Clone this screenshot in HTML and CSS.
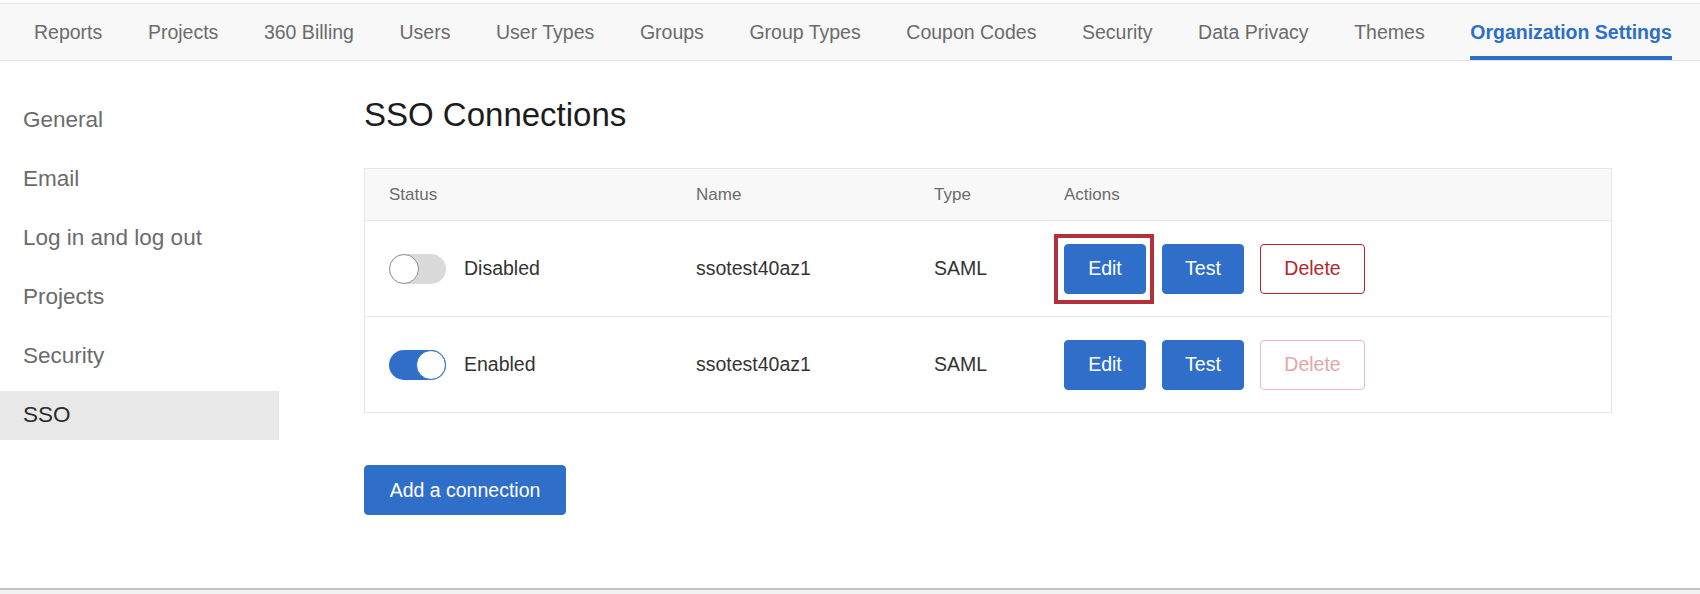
FILE: index.html
```html
<!DOCTYPE html>
<html>
<head>
    <title>Organization Settings - SSO</title>
    <link rel="stylesheet" href="styles.css">
</head>
<body>
    <nav class="topnav">
        <a class="nav-item">Reports</a>
        <a class="nav-item">Projects</a>
        <a class="nav-item">360 Billing</a>
        <a class="nav-item">Users</a>
        <a class="nav-item">User Types</a>
        <a class="nav-item">Groups</a>
        <a class="nav-item">Group Types</a>
        <a class="nav-item">Coupon Codes</a>
        <a class="nav-item">Security</a>
        <a class="nav-item">Data Privacy</a>
        <a class="nav-item">Themes</a>
        <a class="nav-item active">Organization Settings</a>
    </nav>

    <div class="layout">
        <aside class="sidebar">
            <div class="side-item">General</div>
            <div class="side-item">Email</div>
            <div class="side-item">Log in and log out</div>
            <div class="side-item">Projects</div>
            <div class="side-item">Security</div>
            <div class="side-item selected">SSO</div>
        </aside>

        <main class="main">
            <h1>SSO Connections</h1>

            <div class="table">
                <div class="row head">
                    <div>Status</div>
                    <div>Name</div>
                    <div>Type</div>
                    <div>Actions</div>
                </div>
                <div class="row">
                    <div class="status"><span class="toggle"></span>Disabled</div>
                    <div>ssotest40az1</div>
                    <div>SAML</div>
                    <div class="actions">
                        <button class="btn primary highlighted">Edit</button>
                        <button class="btn primary">Test</button>
                        <button class="btn danger">Delete</button>
                    </div>
                </div>
                <div class="row">
                    <div class="status"><span class="toggle on"></span>Enabled</div>
                    <div>ssotest40az1</div>
                    <div>SAML</div>
                    <div class="actions">
                        <button class="btn primary">Edit</button>
                        <button class="btn primary">Test</button>
                        <button class="btn danger" disabled>Delete</button>
                    </div>
                </div>
            </div>

            <button class="btn primary add">Add a connection</button>
        </main>
    </div>

    <div class="footer-line"></div>
</body>
</html>
```

FILE: styles.css
```css
body {
    margin: 0;
    font-family: "Liberation Sans", Arial, sans-serif;
    background: #fff;
    color: #333;
}

.topnav {
    display: flex;
    gap: 45.6px;
    height: 56px;
    margin-top: 3px;
    padding-left: 34px;
    background: #f8f8f8;
    border-top: 1px solid #e8e8e8;
    border-bottom: 1px solid #e2e2e2;
}

.nav-item {
    display: flex;
    align-items: center;
    font-size: 19.5px;
    color: #6b6b6b;
    box-sizing: border-box;
    border-top: 4px solid transparent;
    border-bottom: 4px solid transparent;
}

.nav-item.active {
    color: #2d6fc4;
    font-weight: bold;
    border-bottom-color: #2d6fc4;
}

.layout {
    display: flex;
    height: 527px;
}

.sidebar {
    width: 279px;
    padding-top: 34px;
    flex-shrink: 0;
}

.side-item {
    height: 49px;
    margin-bottom: 10.2px;
    padding-left: 23px;
    display: flex;
    align-items: center;
    font-size: 22.5px;
    color: #6b6b6b;
}

.side-item.selected {
    background: #e8e8e8;
    color: #2b2b2b;
}

.main {
    flex: 1;
    padding: 34px 0 0 85px;
}

h1 {
    margin: 0 0 33px;
    font-size: 33px;
    font-weight: normal;
    line-height: 40px;
    color: #1c1c1c;
}

.table {
    width: 1248px;
    border: 1px solid #e6e6e6;
    box-sizing: border-box;
}

.row {
    display: grid;
    grid-template-columns: 307px 238px 130px 1fr;
    align-items: center;
    height: 95px;
    padding-left: 24px;
    font-size: 19.5px;
    color: #333;
    border-top: 1px solid #e6e6e6;
}

.row.head {
    height: 51px;
    border-top: none;
    background: #f8f8f8;
    font-size: 17px;
    color: #6b6b6b;
}

.status {
    display: flex;
    align-items: center;
}

.toggle {
    position: relative;
    width: 57px;
    height: 30px;
    margin-right: 18px;
    border-radius: 15px;
    background: #dadada;
}

.toggle::before {
    content: "";
    position: absolute;
    left: 0;
    top: 0;
    width: 30px;
    height: 30px;
    box-sizing: border-box;
    border-radius: 50%;
    background: #fff;
    border: 1.5px solid #8f8f8f;
}

.toggle.on {
    background: #2f6fca;
}

.toggle.on::before {
    left: auto;
    right: 0;
    border-color: #2f6fca;
}

.actions {
    display: flex;
    gap: 16px;
}

.btn {
    height: 50px;
    min-width: 82px;
    padding: 0 21px;
    font-family: "Liberation Sans", Arial, sans-serif;
    font-size: 19.5px;
    border-radius: 4px;
    box-sizing: border-box;
    cursor: pointer;
}

.btn.primary {
    background: #2f6fca;
    color: #fff;
    border: 1px solid #2f6fca;
}

.btn.danger {
    min-width: 105px;
    background: #fff;
    color: #b3272b;
    border: 1.5px solid #b3272b;
}

.btn.danger:disabled {
    color: #e4a6a6;
    border-color: #ebbcbc;
    cursor: default;
}

.highlighted {
    position: relative;
}

.highlighted::after {
    content: "";
    position: absolute;
    left: -11px;
    right: -9px;
    top: -11px;
    bottom: -11px;
    border: 4px solid #b3303a;
}

.add {
    margin-top: 52px;
    width: 202px;
}

.footer-line {
    height: 6px;
    border-top: 2px solid #c2c2c2;
    background: #f2f2f2;
    box-sizing: border-box;
}
```
